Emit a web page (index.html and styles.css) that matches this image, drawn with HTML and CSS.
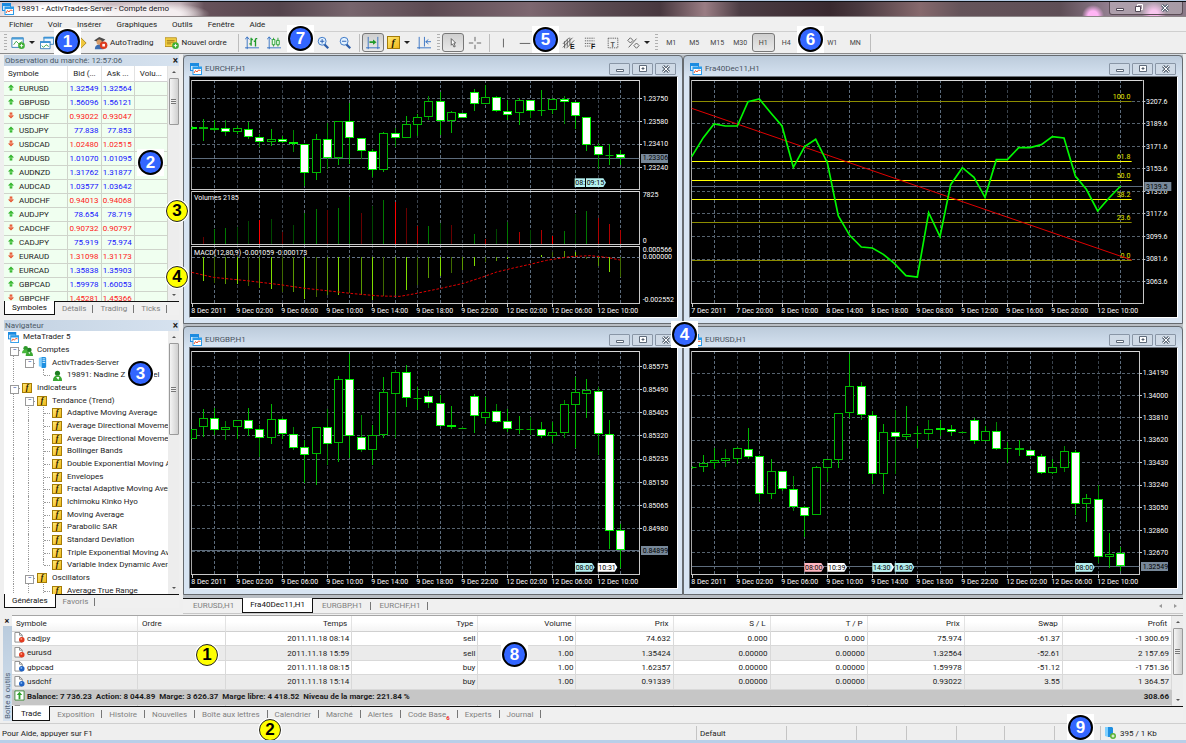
FILE: index.html
```html
<!DOCTYPE html>
<html lang="fr">
<head>
<meta charset="utf-8">
<title>19891 - ActivTrades-Server - Compte demo</title>
<link rel="stylesheet" href="styles.css">
</head>
<body>
<svg class="defs" aria-hidden="true">
  <symbol id="i-app" viewBox="0 0 12 12"><path d="M0 0h9v8H0z" fill="#1c8be0"/><path d="M1 3h7v4H1z" fill="#cfe9fb"/><path d="M2.500 3.500h9.500V12H2.500z" fill="#2a9bea"/><path d="M3.500 6h7.500v5H3.500z" fill="#fff"/><path d="M4 10l1.500-2.500 1.500 1.500 1.500-2 2 .5" fill="none" stroke="#f0562a"/></symbol>
  <symbol id="i-up" viewBox="0 0 8 8"><path d="M4 .5L7.500 4H5.500v3.500h-3V4H.5z" fill="#2fb32a"/><path d="M3.500 3h1v3h-1z" fill="#9be88f"/></symbol>
  <symbol id="i-down" viewBox="0 0 8 8"><path d="M4 7.500L.5 4h2V.5h3V4h2z" fill="#e5532c"/><path d="M3.500 2h1v3h-1z" fill="#ffc9b5"/></symbol>
  <symbol id="i-users" viewBox="0 0 12 12"><circle cx="4" cy="3.500" r="2.500" fill="#2f9a2b"/><path d="M0 9q0-4 4-4t4 4z" fill="#49b83c"/><circle cx="8" cy="5.500" r="2.500" fill="#1f7f22"/><path d="M4 12q0-5 4-5t4 5z" fill="#3aa832"/><path d="M7 8l1 2 1-2z" fill="#fff"/></symbol>
  <symbol id="i-user" viewBox="0 0 12 12"><circle cx="6" cy="3.500" r="2.800" fill="#1f7f22"/><path d="M1 12q0-6 5-6t5 6z" fill="#3aa832"/><path d="M4.500 7.500L7 11l1-3.500z" fill="#fff"/></symbol>
  <symbol id="i-server" viewBox="0 0 12 12"><path d="M2 1l3-1v11l-3-1z" fill="#7fd0ff"/><path d="M5 0h4l1 1v10l-1 1H5z" fill="#1e8fe0"/><path d="M6 2h3M6 4h3M6 6h3" stroke="#d8f0ff"/></symbol>
  <symbol id="i-sell" viewBox="0 0 12 12"><path d="M1 .5h5L9 3.500V11H1z" fill="#fff" stroke="#888"/><path d="M6 .5v3h3" fill="none" stroke="#888"/><circle cx="8.500" cy="8.500" r="3" fill="#e23a1e"/><circle cx="8" cy="7.500" r="1" fill="#ff9d80"/></symbol>
  <symbol id="i-buy" viewBox="0 0 12 12"><path d="M1 .5h5L9 3.500V11H1z" fill="#fff" stroke="#888"/><path d="M6 .5v3h3" fill="none" stroke="#888"/><circle cx="8.500" cy="8.500" r="3" fill="#1f62c4"/><circle cx="8" cy="7.500" r="1" fill="#86bcf5"/></symbol>
  <symbol id="i-min" viewBox="0 0 12 8"><path d="M2.500 4.500h7v2h-7z" fill="#fff" stroke="#5f6b7a"/></symbol>
  <symbol id="i-max" viewBox="0 0 12 8"><path d="M2.500.5h7v6h-7z" fill="#fff" stroke="#5f6b7a"/><path d="M5 3h2v1H5z" stroke="#5f6b7a"/></symbol>
  <symbol id="i-close" viewBox="0 0 12 8"><path d="M3 1l6 6M9 1L3 7" stroke="#5f6b7a" stroke-width="3"/><path d="M3 1l6 6M9 1L3 7" stroke="#fff"/></symbol>
</svg>

<div class="app">
  <header class="titlebar">
    <svg class="ico12"><use href="#i-app"/></svg>
    <h1>19891 - ActivTrades-Server - Compte demo</h1>
    <div class="caption">
      <button aria-label="Réduire"><svg viewBox="0 0 12 8"><path d="M2.500 4.500h7v2h-7z" fill="#fff" stroke="#534a58"/></svg></button>
      <button aria-label="Restaurer"><svg viewBox="0 0 12 8"><path d="M4.500.5h5v5h-5z" fill="none" stroke="#fff"/><path d="M2.500 2.500h5v5h-5z" fill="#fff" stroke="#534a58"/></svg></button>
      <button aria-label="Fermer" class="wide"><svg><use href="#i-close"/></svg></button>
    </div>
  </header>

  <nav class="menubar">
    <button>Fichier</button><button>Voir</button><button>Insérer</button><button>Graphiques</button><button>Outils</button><button>Fenêtre</button><button>Aide</button>
  </nav>

  <div class="toolbar">
    <span class="grip"></span>
    <button class="drop" aria-label="Nouveau graphique"><svg viewBox="0 0 16 14"><path d="M1 1h13v11H1z" fill="#fff" stroke="#2a78b8"/><path d="M1 1h13v2H1z" fill="#4a9fd8"/><path d="M3 9l3-4 3 3 4-3" fill="none" stroke="#2e9a3a"/><circle cx="12" cy="10" r="3.800" fill="#3fae35"/><path d="M12 8v4M10 10h4" stroke="#fff"/></svg><i class="arrow"></i></button>
    <button class="tb" aria-label="Profils"><svg viewBox="0 0 16 14"><path d="M4.500.5h11v8h-11z" fill="#e7f4ff" stroke="#2a78b8"/><path d="M4 0h12v2H4z" fill="#3b93d6"/><path d="M.5 5.500h11v8H.5z" fill="#fff" stroke="#2a78b8"/><path d="M0 5h12v2H0z" fill="#3b93d6"/><path d="M2 10l2 2 3-3 3 2" fill="none" stroke="#2e9a3a"/></svg></button>
    <button class="folder" aria-label="Navigateur"><svg viewBox="0 0 16 14"><path d="M9 1l6 6-6 6-6-6z" fill="#f0c83c" stroke="#a88420"/></svg></button>
    <button class="text"><svg viewBox="0 0 16 14"><path d="M0 4l6-4 7 3-5 4z" fill="#4b4b4b"/><circle cx="6" cy="6" r="3" fill="#d89c68"/><path d="M1 14q0-6 6-5l4 5z" fill="#3d6db0"/><circle cx="11" cy="9.500" r="4.300" fill="#dd3a1d"/><path d="M9.500 8h3v3h-3z" fill="#fff"/></svg>AutoTrading</button>
    <button class="text"><svg viewBox="0 0 16 14"><path d="M0 1h13v10H0z" fill="#f7d548" stroke="#b48c1c"/><path d="M2 4h9M2 6h9M2 8h5" stroke="#9a7410"/><circle cx="12" cy="10" r="3.800" fill="#3fae35"/><path d="M12 8v4M10 10h4" stroke="#fff"/></svg>Nouvel ordre</button>
    <span class="sep"></span>
    <button class="tb" aria-label="Barres"><svg viewBox="0 0 16 14"><path d="M2.500 0v14M0 12.500h16M0 3l2.500-3L5 3" fill="none" stroke="#2d6cc0"/><path d="M7 1v9M5 8h2M7 3h2M12 2v9M10 5h2M12 2h2" stroke="#1f9a2a" stroke-width="1.500"/></svg></button>
    <button class="tb" aria-label="Bougies"><svg viewBox="0 0 16 14"><path d="M2.500 0v14M0 12.500h16M0 3l2.500-3L5 3" fill="none" stroke="#2d6cc0"/><path d="M7.500 1v10M12.500 1v10" stroke="#1f9a2a"/><path d="M6 3h3v6H6zM11 4h3v5h-3z" fill="#e8ffe8" stroke="#1f9a2a"/></svg></button>
    <button class="tb roomy" aria-label="Ligne"></button>
    <button class="tb" aria-label="Zoom avant"><svg viewBox="0 0 16 14"><path d="M9 8l5 5" stroke="#2d5da8" stroke-width="2.500"/><circle cx="7" cy="5" r="4.500" fill="#e3f2ff" stroke="#2d6cc0"/><path d="M4.500 5h5M7 2.500v5" stroke="#1c55b0"/></svg></button>
    <button class="tb" aria-label="Zoom arrière"><svg viewBox="0 0 16 14"><path d="M9 8l5 5" stroke="#2d5da8" stroke-width="2.500"/><circle cx="7" cy="5" r="4.500" fill="#e3f2ff" stroke="#2d6cc0"/><path d="M4.500 5h5" stroke="#1c55b0"/></svg></button>
    <span class="sep tight"></span>
    <button class="tb on" aria-label="Décalage auto" aria-pressed="true"><svg viewBox="0 0 16 14"><path d="M2.500 0v14M13.500 0v14M0 12.500h16" stroke="#2d6cc0"/><path d="M4 6h5" stroke="#1f9a2a" stroke-width="2"/><path d="M8 3l4 3-4 3z" fill="#1f9a2a"/></svg></button>
    <button class="drop roomy" aria-label="Indicateurs"><span class="fx big">f</span><i class="arrow"></i></button>
    <button class="tb" aria-label="Décaler"><svg viewBox="0 0 16 14"><path d="M2.500 0v14M8.500 0v11M0 12.500h16M10 5.500h6M13 3l-3 2.500L13 8" fill="none" stroke="#2d6cc0"/></svg></button>
    <span class="grip"></span>
    <button class="tb on" aria-label="Curseur" aria-pressed="true"><svg viewBox="0 0 16 14"><path d="M6 2l5 5H9l1.500 4-1.500.5L7.500 8 6 9.500z" fill="#fff" stroke="#555"/></svg></button>
    <button class="tb" aria-label="Réticule"><svg viewBox="0 0 16 14"><path d="M8 0v5M8 9v5M1 7h5M10 7h5" stroke="#555"/></svg></button>
    <span class="sep tight"></span>
    <button class="tb" aria-label="Ligne verticale"><svg viewBox="0 0 16 14"><path d="M8.500 2v10" stroke="#555"/></svg></button>
    <button class="tb" aria-label="Ligne horizontale"><svg viewBox="0 0 16 14"><path d="M2 7.500h12" stroke="#555"/></svg></button>
    <button class="tb" aria-label="Ligne de tendance"></button>
    <button class="tb" aria-label="Canal"><svg viewBox="0 0 16 14"><path d="M1 12L12 1M1 8l7-7M5 13l9-9M3 5v8M6 3v8M9 1v8" stroke="#555"/><text x="9" y="14" class="mark">E</text></svg></button>
    <button class="tb" aria-label="Fibonacci"><svg viewBox="0 0 16 14"><path d="M1 1.500h11M1 4.500h11M1 7.500h11M1 10.500h6" stroke="#555" stroke-dasharray="1.500 1"/><text x="8" y="14" class="mark">F</text></svg></button>
    <button class="tb" aria-label="Texte"><svg viewBox="0 0 16 14"><path d="M2.500 1.500h11v11h-11z" fill="none" stroke="#555" stroke-dasharray="1.500 1"/><text x="5" y="11" class="mark lite">T</text></svg></button>
    <button class="drop roomy" aria-label="Formes"><svg viewBox="0 0 16 14"><path d="M2 4l3-3 3 3-3 3zM3 12l9-10M9 10l3-3 3 3-3 3z" fill="none" stroke="#555"/></svg><i class="arrow"></i></button>
    <span class="grip"></span>
    <button class="tf">M1</button><button class="tf">M5</button><button class="tf">M15</button><button class="tf">M30</button><button class="tf on" aria-pressed="true">H1</button><button class="tf">H4</button><button class="tf" aria-label="D1"></button><button class="tf">W1</button><button class="tf">MN</button>
    <span class="sep tight"></span>
  </div>

  <div class="main">
    <aside class="side">
      <section class="panel market">
        <h2>Observation du marché: 12:57:06<button aria-label="Fermer">×</button></h2>
        <div class="scroller">
          <div class="view">
            <table class="quotes">
              <colgroup><col class="q1"><col class="q2"><col class="q2"><col class="q2"></colgroup>
              <thead><tr><th>Symbole</th><th>Bid (...</th><th>Ask ...</th><th>Volu...</th></tr></thead>
              <tbody>
                <tr><td><svg><use href="#i-up"/></svg>EURUSD</td><td>1.32549</td><td>1.32564</td><td></td></tr>
                <tr><td><svg><use href="#i-up"/></svg>GBPUSD</td><td>1.56096</td><td>1.56121</td><td></td></tr>
                <tr class="dn"><td><svg><use href="#i-down"/></svg>USDCHF</td><td>0.93022</td><td>0.93047</td><td></td></tr>
                <tr><td><svg><use href="#i-up"/></svg>USDJPY</td><td>77.838</td><td>77.853</td><td></td></tr>
                <tr class="dn"><td><svg><use href="#i-down"/></svg>USDCAD</td><td>1.02480</td><td>1.02515</td><td></td></tr>
                <tr><td><svg><use href="#i-up"/></svg>AUDUSD</td><td>1.01070</td><td>1.01095</td><td></td></tr>
                <tr><td><svg><use href="#i-up"/></svg>AUDNZD</td><td>1.31762</td><td>1.31877</td><td></td></tr>
                <tr><td><svg><use href="#i-up"/></svg>AUDCAD</td><td>1.03577</td><td>1.03642</td><td></td></tr>
                <tr class="dn"><td><svg><use href="#i-down"/></svg>AUDCHF</td><td>0.94013</td><td>0.94068</td><td></td></tr>
                <tr><td><svg><use href="#i-up"/></svg>AUDJPY</td><td>78.654</td><td>78.719</td><td></td></tr>
                <tr class="dn"><td><svg><use href="#i-down"/></svg>CADCHF</td><td>0.90732</td><td>0.90797</td><td></td></tr>
                <tr><td><svg><use href="#i-up"/></svg>CADJPY</td><td>75.919</td><td>75.974</td><td></td></tr>
                <tr class="dn"><td><svg><use href="#i-down"/></svg>EURAUD</td><td>1.31098</td><td>1.31173</td><td></td></tr>
                <tr><td><svg><use href="#i-up"/></svg>EURCAD</td><td>1.35838</td><td>1.35903</td><td></td></tr>
                <tr><td><svg><use href="#i-up"/></svg>GBPCAD</td><td>1.59978</td><td>1.60053</td><td></td></tr>
                <tr class="dn"><td><svg><use href="#i-down"/></svg>GBPCHF</td><td>1.45281</td><td>1.45366</td><td></td></tr>
              </tbody>
            </table>
          </div>
          <div class="vbar"><i class="up"></i><span class="thumb short"></span><i class="down"></i></div>
        </div>
        <div class="tabs"><button class="sel">Symboles</button><button>Détails</button><button>Trading</button><button>Ticks</button></div>
      </section>

      <section class="panel navi">
        <h2>Navigateur<button aria-label="Fermer">×</button></h2>
        <div class="scroller">
          <ul class="tree">
            <li class="root"><svg><use href="#i-app"/></svg>MetaTrader 5</li>
            <li><i class="box"></i><svg><use href="#i-users"/></svg>Comptes</li>
            <li><i class="v"></i><i class="box"></i><svg><use href="#i-server"/></svg>ActivTrades-Server</li>
            <li><i class="v"></i><i></i><i class="end"></i><svg><use href="#i-user"/></svg>19891: Nadine Z&nbsp;&nbsp;&nbsp;&nbsp;&nbsp;&nbsp;&nbsp;&nbsp;&nbsp;&nbsp;&nbsp;&nbsp;&nbsp;&nbsp;el</li>
            <li><i class="box"></i><span class="fx">f</span>Indicateurs</li>
            <li><i class="v"></i><i class="box"></i><span class="fx">f</span>Tendance (Trend)</li>
            <li><i class="v"></i><i class="v"></i><i class="tee"></i><span class="fx">f</span>Adaptive Moving Average</li>
            <li><i class="v"></i><i class="v"></i><i class="tee"></i><span class="fx">f</span>Average Directional Movement Index</li>
            <li><i class="v"></i><i class="v"></i><i class="tee"></i><span class="fx">f</span>Average Directional Movement Index Wilder</li>
            <li><i class="v"></i><i class="v"></i><i class="tee"></i><span class="fx">f</span>Bollinger Bands</li>
            <li><i class="v"></i><i class="v"></i><i class="tee"></i><span class="fx">f</span>Double Exponential Moving Average</li>
            <li><i class="v"></i><i class="v"></i><i class="tee"></i><span class="fx">f</span>Envelopes</li>
            <li><i class="v"></i><i class="v"></i><i class="tee"></i><span class="fx">f</span>Fractal Adaptive Moving Average</li>
            <li><i class="v"></i><i class="v"></i><i class="tee"></i><span class="fx">f</span>Ichimoku Kinko Hyo</li>
            <li><i class="v"></i><i class="v"></i><i class="tee"></i><span class="fx">f</span>Moving Average</li>
            <li><i class="v"></i><i class="v"></i><i class="tee"></i><span class="fx">f</span>Parabolic SAR</li>
            <li><i class="v"></i><i class="v"></i><i class="tee"></i><span class="fx">f</span>Standard Deviation</li>
            <li><i class="v"></i><i class="v"></i><i class="tee"></i><span class="fx">f</span>Triple Exponential Moving Average</li>
            <li><i class="v"></i><i class="v"></i><i class="end"></i><span class="fx">f</span>Variable Index Dynamic Average</li>
            <li><i class="v"></i><i class="box"></i><span class="fx">f</span>Oscillators</li>
            <li><i class="v"></i><i class="v"></i><i class="tee"></i><span class="fx">f</span>Average True Range</li>
          </ul>
          <div class="vbar"><i class="up"></i><span class="thumb long"></span><i class="down"></i></div>
        </div>
        <div class="tabs"><button class="sel">Générales</button><button>Favoris</button></div>
      </section>
    </aside>

    <div class="work">
      <div class="windows">
        <section class="win"><h3><svg class="ico12"><use href="#i-app"/></svg>EURCHF,H1<span class="ctl"><button aria-label="Réduire"><svg><use href="#i-min"/></svg></button><button aria-label="Agrandir"><svg><use href="#i-max"/></svg></button><button aria-label="Fermer"><svg><use href="#i-close"/></svg></button></span></h3><div class="chart"><svg id="eurchf" viewBox="30 81 1461 720" preserveAspectRatio="xMinYMin meet"></svg></div></section>
        <section class="win"><h3><svg class="ico12"><use href="#i-app"/></svg>Fra40Dec11,H1<span class="ctl"><button aria-label="Réduire"><svg><use href="#i-min"/></svg></button><button aria-label="Agrandir"><svg><use href="#i-max"/></svg></button><button aria-label="Fermer"><svg><use href="#i-close"/></svg></button></span></h3><div class="chart"><svg id="fra40" viewBox="30 81 1461 720" preserveAspectRatio="xMinYMin meet"></svg></div></section>
        <section class="win"><h3><svg class="ico12"><use href="#i-app"/></svg>EURGBP,H1<span class="ctl"><button aria-label="Réduire"><svg><use href="#i-min"/></svg></button><button aria-label="Agrandir"><svg><use href="#i-max"/></svg></button><button aria-label="Fermer"><svg><use href="#i-close"/></svg></button></span></h3><div class="chart"><svg id="eurgbp" viewBox="30 69 1461 720" preserveAspectRatio="xMinYMin meet"></svg></div></section>
        <section class="win"><h3><svg class="ico12"><use href="#i-app"/></svg>EURUSD,H1<span class="ctl"><button aria-label="Réduire"><svg><use href="#i-min"/></svg></button><button aria-label="Agrandir"><svg><use href="#i-max"/></svg></button><button aria-label="Fermer"><svg><use href="#i-close"/></svg></button></span></h3><div class="chart"><svg id="eurusd" viewBox="30 69 1461 720" preserveAspectRatio="xMinYMin meet"></svg></div></section>
      </div>
      <div class="tabs mdi"><button>EURUSD,H1</button><button class="sel">Fra40Dec11,H1</button><button>EURGBP,H1</button><button>EURCHF,H1</button><span class="pager"><i></i><i class="r"></i></span></div>
    </div>
  </div>

  <section class="toolbox">
    <div class="spine"><button aria-label="Fermer">×</button><span>Boîte à outils</span></div>
    <div class="body">
      <div class="scroller">
        <div class="view">
          <table class="trades">
            <colgroup><col class="c126"><col class="c88"><col class="c126"><col class="c126"><col class="c98"><col class="c97"><col class="c97"><col class="c97"><col class="c97"><col class="c98"><col class="c109"></colgroup>
            <thead><tr><th>Symbole</th><th>Ordre</th><th>Temps</th><th>Type</th><th>Volume</th><th>Prix</th><th>S / L</th><th>T / P</th><th>Prix</th><th>Swap</th><th>Profit</th></tr></thead>
            <tbody>
              <tr><td><svg><use href="#i-sell"/></svg>cadjpy</td><td></td><td>2011.11.18 08:14</td><td>sell</td><td>1.00</td><td>74.632</td><td>0.000</td><td>0.000</td><td>75.974</td><td>-61.37</td><td>-1 300.69</td></tr>
              <tr><td><svg><use href="#i-sell"/></svg>eurusd</td><td></td><td>2011.11.18 15:59</td><td>sell</td><td>1.00</td><td>1.35424</td><td>0.00000</td><td>0.00000</td><td>1.32564</td><td>-52.61</td><td>2 157.69</td></tr>
              <tr><td><svg><use href="#i-buy"/></svg>gbpcad</td><td></td><td>2011.11.18 08:15</td><td>buy</td><td>1.00</td><td>1.62357</td><td>0.00000</td><td>0.00000</td><td>1.59978</td><td>-51.12</td><td>-1 751.36</td></tr>
              <tr><td><svg><use href="#i-buy"/></svg>usdchf</td><td></td><td>2011.11.18 15:14</td><td>buy</td><td>1.00</td><td>0.91339</td><td>0.00000</td><td>0.00000</td><td>0.93022</td><td>3.55</td><td>1 364.57</td></tr>
              <tr class="sum"><td colspan="10"><svg viewBox="0 0 12 12"><path d="M1 1h10v10H1z" fill="#fff" stroke="#3a8a34"/><path d="M6 2l3 3.500H7V10H5V5.500H3z" fill="#2fa32a"/></svg>Balance: 7 736.23&nbsp; Action: 8 044.89&nbsp; Marge: 3 626.37&nbsp; Marge libre: 4 418.52&nbsp; Niveau de la marge: 221.84 %</td><td>308.66</td></tr>
              <tr class="next"><td><svg><use href="#i-buy"/></svg>eurusd</td><td>8272014</td><td>2011.11.18 15:31</td><td>buy limit</td><td>1.00 / 0.00</td><td>1.40640</td><td>0.00000</td><td>0.00000</td><td>1.32540</td><td></td><td>placed</td></tr>
            </tbody>
          </table>
        </div>
        <div class="vbar"><i class="up"></i><span class="thumb short"></span><i class="down"></i></div>
      </div>
      <div class="tabs"><button class="sel">Trade</button><button>Exposition</button><button>Histoire</button><button>Nouvelles</button><button>Boîte aux lettres</button><button>Calendrier</button><button>Marché</button><button>Alertes</button><button>Code Base<sub>6</sub></button><button>Experts</button><button>Journal</button></div>
    </div>
  </section>

  <footer class="status">
    <span class="s-help">Pour Aide, appuyer sur F1</span>
    <span class="s-90">Default</span><span class="s-70"></span><span class="s-50"></span><span class="s-50"></span><span class="s-48"></span><span class="s-50"></span><span class="s-46"></span>
    <span class="s-net"><svg viewBox="0 0 12 12"><path d="M1 0h3v10L1 9z" fill="#7fd0ff"/><path d="M4 0h4l1 1v9H4z" fill="#1e8fe0"/><circle cx="9" cy="9" r="3" fill="#5cb336"/><path d="M9 7.500v3M7.500 9h3" stroke="#fff"/></svg>395 / 1 Kb</span>
  </footer>

  <div class="pins">
    <b class="pin blue p1">1</b><b class="pin blue p2">2</b><b class="pin blue p3">3</b><b class="pin blue p4">4</b><b class="pin blue p5">5</b><b class="pin blue p6">6</b><b class="pin blue p7">7</b><b class="pin blue p8">8</b><b class="pin blue p9">9</b>
    <b class="pin gold y1">1</b><b class="pin gold y2">2</b><b class="pin gold y3">3</b><b class="pin gold y4">4</b>
  </div>
</div>
<script src="charts.js"></script>
</body>
</html>
```

FILE: styles.css
```css
* { box-sizing: border-box; }
body { margin: 0; font: 8px/12px Roboto, "Liberation Sans", sans-serif; color: #1c1c1c; background: #f0f0f0; }
h1, h2, h3, ul { margin: 0; padding: 0; font-size: 8px; font-weight: 400; list-style: none; }
button { margin: 0; padding: 0; border: 0; background: none; font: inherit; color: inherit; white-space: nowrap; }
.defs { position: absolute; width: 0; height: 0; }
.ico12 { width: 12px; height: 12px; flex: none; }

.app { position: relative; min-height: 100vh; display: flex; flex-direction: column; border-top: 1px solid #b4cbe4; border-bottom: 3px solid #b8cfe9; background: #efefef; overflow: hidden; }

.titlebar { display: flex; align-items: center; gap: 3px; height: 16px; padding-left: 2px; border-top: 1px solid #101014; border-bottom: 1px solid #8d8688;
  background:
    radial-gradient(ellipse 70px 14px at 60px 12px, #fff 60%, #fff0 100%),
    radial-gradient(ellipse 60px 12px at 150px 12px, #f4eef0 50%, #f4eef000 100%),
    radial-gradient(circle at 1093px 14px, #ffb4f4 0 5px, #ffb4f400 11px),
    radial-gradient(circle at 1154px 12px, #f6b4e8 0 4px, #f6b4e800 12px),
    linear-gradient(90deg, #d9cbd0 0, #c5b4ba 180px, #67525b 204px, #54444c 280px, #77656d 350px, #5c4a52 430px, #7d6770 530px, #5a4a51 600px, #48383f 660px, #9a7d84 705px, #4c3d44 740px, #39292f 830px, #4a3a40 860px, #86696d 920px, #65545a 960px, #5e4e56 1060px, #937f90 1110px, #8a7a88 100%); }
.titlebar h1 { line-height: 14px; color: #15151a; }
.caption { margin: 0 3px 0 auto; align-self: flex-start; display: flex; height: 13px; border: 1px solid #5a4c55; border-top: 0; border-radius: 0 0 3px 3px; background: #ffffff40; }
.caption button { width: 19px; display: grid; place-items: center; }
.caption .wide { width: 34px; }
.caption svg { width: 12px; height: 8px; display: block; }

.menubar { display: flex; gap: 15px; height: 15px; padding: 0 9px; background: #f0f0f0; border-bottom: 1px solid #cfcfcf; }
.menubar button { line-height: 15px; }

.toolbar { display: flex; align-items: center; height: 22px; padding: 0 2px; border-bottom: 1px solid #8a8a8a; background: #efefef; white-space: nowrap; }
.toolbar svg { width: 14px; height: 14px; display: block; flex: none; }
.toolbar button { height: 19px; display: flex; align-items: center; justify-content: center; flex: none; }
.grip { width: 3px; height: 18px; margin: 0 2px; background: repeating-linear-gradient(#b0b0b0 0 1px, #efefef 1px 3px); flex: none; }
.sep { width: 1px; height: 18px; margin: 0 2px 0 3px; background: #bdbdbd; flex: none; }
.toolbar .tb { width: 22px; }
.toolbar .tb.roomy { width: 27px; }
.tb.on, .tf.on { border: 1px solid #777; border-radius: 3px; background: linear-gradient(#cfcfcf, #e9e9e9); }
.toolbar .drop { width: 27px; gap: 4px; }
.toolbar .drop.roomy { width: 29px; }
.arrow { border: 3px solid transparent; border-top-color: #222; border-bottom: 0; }
.folder { width: 32px; }
.folder svg { margin-left: 12px; }
.toolbar .text { gap: 2px; padding: 0 4px; margin-right: 4px; }
.tf { width: 23px; color: #444; font-size: 7px; }
.mark { font: bold 8px "Liberation Sans", sans-serif; fill: #111; }
.mark.lite { fill: #555; }
.fx { width: 10px; height: 10px; flex: none; display: inline-grid; place-items: center; border: 1px solid #a47c08; background: linear-gradient(135deg, #ffe873, #f0b818); font: italic bold 8px/8px "Liberation Serif", serif; color: #1c1400; }
.fx.big { width: 13px; height: 13px; font-size: 10px; }

.main { flex: 1; display: grid; grid-template-columns: 179px minmax(0, 1fr); column-gap: 4px; padding-right: 3px; min-height: 0; }
.side { display: grid; grid-template: 260px minmax(0, 1fr) / minmax(0, 1fr); row-gap: 5px; padding: 1px 0 6px 4px; min-width: 0; min-height: 0; }
.panel { display: flex; flex-direction: column; min-width: 0; min-height: 0; }
.panel h2 { display: flex; justify-content: space-between; height: 11px; line-height: 11px; padding: 0 1px; background: linear-gradient(90deg, #c3d2e2, #d6e2ef); color: #4a5866; }
.panel h2 button { font-size: 10px; font-weight: 700; color: #222; line-height: 10px; }
.scroller { flex: 1; display: flex; min-height: 0; overflow: hidden; background: #fff; }
.view { flex: 1; min-width: 0; overflow: hidden; }
.vbar { width: 11px; flex: none; display: flex; flex-direction: column; align-items: center; background: #ededed; }
.vbar i { height: 12px; display: grid; place-items: center; }
.vbar i::before { content: ""; border: 2px solid transparent; }
.vbar .up::before { border-bottom-color: #555; border-top: 0; }
.vbar .down { margin-top: auto; }
.vbar .down::before { border-top-color: #555; border-bottom: 0; }
.thumb { width: 10px; border: 1px solid #9a9a9a; border-radius: 1px; display: grid; place-items: center; background: linear-gradient(90deg, #f4f4f4, #cfcfcf); }
.thumb::before { content: ""; width: 5px; height: 5px; background: repeating-linear-gradient(#777 0 1px, #eee 1px 2px); }
.thumb.short { height: 47px; }
.thumb.long { height: 92px; }

table { border-collapse: separate; border-spacing: 0; table-layout: fixed; width: 100%; }
th, td { padding: 0; font-weight: 400; white-space: nowrap; overflow: hidden; }
td svg { width: 11px; height: 11px; vertical-align: middle; }
.quotes th { height: 16px; line-height: 15px; text-align: center; background: #fff; border-right: 1px solid #e2e2e2; border-bottom: 1px solid #d0d0d0; }
.quotes th:first-child { text-align: left; padding-left: 4px; }
.q1 { width: 64px; } .q2 { width: 33px; }
.quotes td { height: 14px; line-height: 14px; text-align: right; padding-right: 2px; color: #1414ff; background: #f0fff0; border-right: 1px solid #cfd4cb; border-bottom: 1px solid #cfd4cb; }
.quotes td { line-height: 13px; }
.quotes td:first-child { text-align: left; color: #1c1c1c; }
.quotes td svg { width: 8px; height: 7px; margin: 0 4px 2px 3px; }
.quotes .dn td { color: #ff1a1a; }
.quotes .dn td:first-child { color: #1c1c1c; }

.tabs { display: flex; height: 14px; border-top: 1px solid #111; background: #f0f0f0; color: #808080; }
.tabs button { padding: 0 7px; line-height: 13px; position: relative; }
.tabs button::after { content: ""; position: absolute; right: 0; top: 3px; height: 8px; border-right: 1px solid #777; }
.tabs .sel { margin-top: -1px; border: 1px solid #111; border-top: 0; background: #fff; color: #111; }
.tabs .sel::after { display: none; }
.tabs sub { font-size: 6px; font-weight: 700; color: #f02020; line-height: 6px; }

.tree { flex: 1; min-width: 0; display: flex; flex-direction: column; margin-bottom: -3px; overflow: hidden; background: #fff; }
.tree li { flex: 1; display: flex; align-items: center; min-height: 0; padding-left: 1px; white-space: nowrap; overflow: hidden; }
.tree svg { width: 11px; height: 11px; flex: none; margin: 0 4px 0 2px; }
.tree .root svg { margin-left: 3px; }
.tree .fx { margin: 0 5px 0 2px; }
.tree i { position: relative; width: 15px; align-self: stretch; flex: none; }
.tree .v::before, .tree .tee::before, .tree .end::before { content: ""; position: absolute; left: 8px; top: 0; bottom: 0; border-left: 1px dotted #999; }
.tree .end::before { bottom: 50%; }
.tree .tee::after, .tree .end::after, .box::after { content: ""; position: absolute; left: 9px; right: 0; top: 50%; border-top: 1px dotted #999; }
.box::before { content: "−"; position: absolute; z-index: 1; left: 5px; top: 3px; width: 7px; height: 7px; border: 1px solid #999; background: #fff; font-style: normal; font-size: 7px; line-height: 5px; text-align: center; color: #2347a0; }

.work { display: flex; flex-direction: column; min-width: 0; padding-top: 1px; background: #d5dbe1; }
.windows { flex: 1; display: grid; grid-template: minmax(0, 1fr) minmax(0, 1fr) / minmax(0, 1fr) minmax(0, 1fr); row-gap: 2px; padding-bottom: 3px; min-height: 0; background: #b9bec4; }
.win { display: flex; flex-direction: column; min-height: 0; padding: 0 4px 5px 5px; border: 1px solid #666b70; border-radius: 4px 4px 0 0; background: linear-gradient(#bccbdb, #d7e4f2 22px); }
.win h3 { display: flex; align-items: center; gap: 3px; height: 20px; padding: 5px 2px 0 1px; line-height: 12px; color: #48525e; }
.ctl { margin-left: auto; display: flex; gap: 2px; }
.ctl button { width: 21px; height: 12px; display: grid; place-items: center; border: 1px solid #8996a6; border-radius: 1px; background: #cfdae6; }
.ctl svg { width: 12px; height: 8px; display: block; }
.chart { flex: 1; min-height: 0; border: 1px solid #fff; border-top-color: #6d737a; border-left-color: #6d737a; background: #000; }
.chart svg { width: 100%; height: 100%; display: block; }
.chart text { font: 21px Roboto, "Liberation Sans", sans-serif; fill: #fff; }
.chart .end { text-anchor: end; fill: #e6e600; }
.chart .dark { fill: #000; }
.tabs.mdi { height: 16px; border-bottom: 1px solid #c8c8c8; padding-left: 1px; }
.mdi button { padding: 0 8px 0 9px; line-height: 14px; }
.mdi .sel { padding: 0 7px; }
.mdi button:first-child::after { display: none; }
.pager { margin-left: auto; display: flex; gap: 12px; align-items: center; padding-right: 6px; }
.pager i { border: 2px solid transparent; border-right: 3px solid #999; border-left: 0; }
.pager .r { border-left: 3px solid #999; border-right: 0; }

.toolbox { display: flex; height: 110px; padding: 1px 3px 2px 2px; border-bottom: 1px solid #cfcfcf; }
.spine { width: 10px; flex: none; display: flex; flex-direction: column; align-items: center; }
.spine button { height: 11px; font-size: 9px; font-weight: 700; line-height: 10px; }
.spine span { flex: 1; width: 9px; line-height: 9px; writing-mode: vertical-rl; transform: rotate(180deg); background: linear-gradient(#d6e2ef, #b9cbdd); color: #4f6175; padding-top: 2px; }
.body { flex: 1; min-width: 0; display: flex; flex-direction: column; }
.toolbox .scroller { border-top: 1px solid #a5a5a5; }
.c126 { width: 126px; } .c88 { width: 88px; } .c98 { width: 98px; } .c97 { width: 97px; } .c109 { width: 109px; }
.trades th { height: 16px; line-height: 15px; text-align: right; padding: 0 4px; border-right: 1px solid #e3e3e3; border-bottom: 1px solid #d0d0d0; background: linear-gradient(#fff 40%, #f4f4f4); }
.trades th:nth-child(-n+2) { text-align: left; }
.trades td { height: 14px; line-height: 13px; text-align: right; padding: 0 2px; border-right: 1px solid #d9d9d9; border-bottom: 1px solid #d9d9d9; }
.trades td:first-child { text-align: left; padding-left: 2px; }
.trades td svg { margin: 0 2px 2px 0; }
.trades tr:nth-child(even) td { background: #ebebeb; }
.trades .sum td { height: 15px; line-height: 14px; font-weight: 700; background: #c6c6c6; border-color: #c6c6c6; }
.toolbox .tabs { height: 15px; }
.toolbox .tabs button { padding: 0 8px 0 7px; }
.toolbox .tabs .sel { padding: 0 8px; }

.status { display: flex; align-items: flex-end; height: 16px; padding-left: 2px; color: #222; }
.status span { height: 14px; line-height: 15px; border-left: 1px solid #c4c4c4; padding-left: 3px; flex: none; }
.status .s-help { flex: 1; border: 0; padding: 0; }
.s-90 { width: 90px; } .s-70 { width: 70px; } .s-50 { width: 50px; } .s-48 { width: 48px; } .s-46 { width: 46px; }
.s-net { width: 86px; display: flex; align-items: center; gap: 4px; }
.s-net svg { width: 12px; height: 12px; }

.pins { position: absolute; inset: 0; z-index: 2; pointer-events: none; }
.pin { position: absolute; display: grid; place-items: center; border-radius: 50%; font-family: "Liberation Sans", Arial, sans-serif; font-weight: 700; font-size: 17px; line-height: 20px; }
.blue { width: 25px; height: 25px; border: 2px solid #000; background: #3366ff; color: #fff; }
.blue::before { content: ""; position: absolute; z-index: -1; inset: -3px; background: #fff; }
.gold { width: 22px; height: 22px; border: 1px solid #222; background: #ff0; color: #000; box-shadow: 0 0 0 1px #fff; }
.p1 { left: 55px; top: 28px; } .p2 { left: 138px; top: 149px; } .p3 { left: 128px; top: 360px; } .p4 { left: 672px; top: 321px; }
.p5 { left: 533px; top: 26px; } .p6 { left: 798px; top: 26px; } .p7 { left: 288px; top: 25px; } .p8 { left: 502px; top: 641px; } .p9 { left: 1068px; top: 714px; }
.y1 { left: 196px; top: 643px; } .y2 { left: 259px; top: 718px; } .y3 { left: 166px; top: 199px; } .y4 { left: 166px; top: 265px; }
```

FILE: charts.js
```js
const NS = 'http://www.w3.org/2000/svg';
const STEP = 33.82;
const xAt = i => Math.round((35 + STEP * i) / 3) * 3;
const snap = y => Math.round(y / 3) * 3;

function add(svg, name, attrs, text) {
  const el = document.createElementNS(NS, name);
  for (const k in attrs) el.setAttribute(k, attrs[k]);
  if (text) el.textContent = text;
  svg.appendChild(el);
}
function line(svg, x1, y1, x2, y2, stroke, extra) {
  add(svg, 'path', Object.assign({ d: `M${x1} ${y1}L${x2} ${y2}`, stroke, 'stroke-width': 3, fill: 'none' }, extra));
}
const h = (svg, x1, x2, y, c, e) => line(svg, x1, snap(y) + 1.5, x2, snap(y) + 1.5, c, e);
const v = (svg, x, y1, y2, c, e) => line(svg, x + 1.5, snap(y1), x + 1.5, snap(y2), c, e);

function frame(svg, o) {
  for (let i = 2; i <= 38; i += 2) v(svg, xAt(i), o.top, o.bottom, i % 4 ? '#5c6c7c' : '#3a434d', { 'stroke-dasharray': '9 6' });
  o.grid.forEach(y => h(svg, 36, o.right, y, '#56636f', { 'stroke-dasharray': '9 6' }));
  o.boxes.forEach(b => {
    h(svg, 33, o.right, b[0], '#d8d8d8');
    h(svg, 33, o.right, b[1], '#c8c8c8');
    v(svg, 33, b[0], b[1], '#a8a8a8');
    v(svg, snap(o.right), b[0], b[1] + 3, '#c8c8c8');
  });
  o.labels.forEach((t, i) => {
    h(svg, o.right, o.right + 8, o.grid[i], '#ccc');
    add(svg, 'text', { x: o.right + 10, y: o.grid[i] + 8 }, t);
  });
  o.dates.forEach((t, i) => {
    v(svg, xAt(i * 4), o.bottom, o.bottom + 10, '#ccc');
    add(svg, 'text', { x: xAt(i * 4) - 2, y: o.bottom + 28 }, t);
  });
  h(svg, 36, o.right, o.price[0], '#5d6c7c');
}
function priceTag(svg, o) {
  add(svg, 'rect', { x: o.right + 5, y: snap(o.price[0]) - 12, width: 81, height: 27, fill: '#778899' });
  add(svg, 'text', { x: o.right + 10, y: o.price[0] + 8, class: 'dark' }, o.price[1]);
}
/* bar: body top, body bottom, high, low, filled */
function candles(svg, bars) {
  bars.forEach((b, i) => {
    const x = xAt(i), solid = b[4], c = solid ? '#00f400' : '#00b800';
    v(svg, x, b[2], b[3], i % 3 ? '#00b800' : '#008a00');
    const top = snap(b[0]), ht = snap(b[1]) - top, left = Math.max(x - 10.5, 34.5);
    if (ht < 6) h(svg, left, x + 13.5, top, c);
    else add(svg, 'rect', { x: left, y: top + 1.5, width: x + 13.5 - left, height: ht - 3, fill: solid ? '#fff' : '#000', stroke: c, 'stroke-width': 3 });
  });
}
function flag(svg, x, y, w, color, text) {
  add(svg, 'path', { d: `M${x} ${y}h${w - 8}l8 13l-8 13h-${w - 8}z`, fill: color });
  add(svg, 'text', { x: x + 2, y: y + 20, class: 'dark' }, text);
}

const DATES = ['8 Dec 2011', '9 Dec 02:00', '9 Dec 06:00', '9 Dec 10:00', '9 Dec 14:00', '9 Dec 18:00', '9 Dec 22:00', '12 Dec 02:00', '12 Dec 06:00', '12 Dec 10:00'];
const CYAN = '#b4f0f0';

/* EURCHF */
{
  const s = document.getElementById('eurchf');
  const o = { top: 91, bottom: 760, right: 1378, grid: [145, 214, 281, 352], labels: ['1.23750', '1.23580', '1.23410', '1.23240'],
    boxes: [[91, 418], [424, 583], [589, 760]], dates: DATES, price: [323, '1.23306'] };
  frame(s, o);
  h(s, 36, 1378, 620, '#66758a', { 'stroke-dasharray': '9 6' });
  candles(s, [[231,237,229,239,1],[232,236,207,272],[233,239,209,242],[233,245,209,259,1],[235,245,229,252],[238,260,217,266,1],[260,275,252,290,1],[267,275,237,288],[266,277,258,280,1],[275,281,241,305,1],[283,370,281,407,1],[268,368,253,389],[268,323,219,357,1],[213,323,213,345],[213,265,159,343,1],[265,303,265,326,1],[304,359,297,380,1],[250,360,245,365],[249,265,234,290,1],[223,265,198,265],[202,224,192,258],[154,200,138,209],[154,212,125,255,1],[187,212,183,248],[188,203,188,203,1],[127,163,117,182,1],[142,163,104,163],[142,182,139,187,1],[182,194,151,210,1],[151,188,144,224],[151,184,151,204,1],[181,184,120,197],[147,181,144,191],[148,157,138,222,1],[157,199,155,236,1],[202,286,202,304,1],[289,316,278,357,1],[316,316,282,346],[313,323,300,346,1]]);
  const col = { g: '#007800', d: '#004800', r: '#b00000', R: '#ff0000', k: '#680000' };
  '562k 538g 534g 530d 512d 510R 507d 545k 526d 488g 477g 480k 473g 440g 490k 468d 451g 455R 475k 528r 528g 518d 525k 583d 552g 567r 537d 516g 545r 540d 541r 557R 544g 492d 484g 505r 523r 540r'
    .split(' ').forEach((t, i) => v(s, xAt(i + 1), parseInt(t), 583, col[t[3]]));
  [694,699,701,703,708,713,717,725,726,748,741,735,735,729,735,750,739,735,720,705,683,678,668,660,647,636,632,628,620,621,615,607,603,607,627,648,666,682]
    .forEach((y, i) => v(s, xAt(i + 1), 620, y, ['#3f6a00', '#5a9800', '#7fdc00'][(i + 2) % 3]));
  add(s, 'polyline', { points: '35,667 100,682 200,692 300,704 375,715 440,722 520,731 600,738 660,739 700,732 778,716 850,700 900,684 950,666 1000,654 1050,643 1100,631 1170,620 1230,617 1280,622 1320,630', fill: 'none', stroke: '#e00000', 'stroke-width': 3, 'stroke-dasharray': '8 5' });
  add(s, 'text', { x: 42, y: 449 }, 'Volumes 2185');
  add(s, 'text', { x: 42, y: 614 }, 'MACD(12,80,9) -0.001059 -0.000173');
  [['7825', 441], ['0', 579], ['0.000566', 607], ['0.000000', 627], ['-0.002552', 756]].forEach(t => add(s, 'text', { x: 1388, y: t[1] }, t[0]));
  flag(s, 1218, 385, 60, CYAN, '09:15');
  add(s, 'rect', { x: 1184, y: 385, width: 31, height: 26, fill: CYAN });
  add(s, 'text', { x: 1186, y: 405, class: 'dark' }, '08:');
  priceTag(s, o);
}

/* Fra40 */
{
  const s = document.getElementById('fra40');
  const o = { top: 91, bottom: 760, right: 1388, grid: [153, 220, 288, 355, 424, 490, 559, 626, 694],
    labels: ['3207.6', '3189.6', '3171.6', '3153.6', '3135.6', '3117.6', '3099.6', '3081.6', '3063.6'], boxes: [[91, 760]],
    dates: ['7 Dec 2011', '7 Dec 20:00', '8 Dec 10:00', '8 Dec 14:00', '8 Dec 18:00', '9 Dec 08:00', '9 Dec 12:00', '9 Dec 16:00', '9 Dec 20:00', '12 Dec 10:00'], price: [409, '3139.5'] };
  frame(s, o);
  [[153, '100.0', 0], [334, '61.8', 1], [391, '50.0', 1], [448, '38.2', 1], [517, '23.6', 0], [631, '0.0', 0]].forEach(f => {
    h(s, 36, 1355, f[0], f[2] ? '#ffff00' : '#8c8c00');
    add(s, 'text', { x: 1351, y: f[0] - 7, class: 'end' }, f[1]);
  });
  line(s, 35, 175, 1355, 630, '#e00000');
  add(s, 'polyline', { points: '35,320 70,263 102,222 136,228 172,228 204,155 238,147 272,188 306,228 340,352 374,290 407,268 442,338 475,498 509,556 544,591 577,594 610,613 643,640 678,677 712,681 746,488 780,560 812,404 847,353 882,382 915,442 949,329 982,329 1016,293 1050,293 1084,284 1117,260 1152,264 1186,378 1219,418 1253,483 1287,444 1322,408', fill: 'none', stroke: '#00f800', 'stroke-width': 5 });
  priceTag(s, o);
}

/* EURGBP */
{
  const s = document.getElementById('eurgbp');
  const o = { top: 78, bottom: 748, right: 1378, grid: [124, 193, 262, 331, 401, 471, 541, 610, 679],
    labels: ['0.85575', '0.85490', '0.85405', '0.85320', '0.85235', '0.85150', '0.85065', '0.84980'], boxes: [[78, 748]], dates: DATES, price: [676, '0.84899'] };
  frame(s, o);
  candles(s, [[313,343,313,343],[280,307,252,336],[280,314,250,330,1],[307,314,288,345],[284,307,284,343],[285,313,248,332,1],[312,338,300,396,1],[283,338,237,357],[282,328,278,343,1],[328,368,306,375,1],[366,389,346,473,1],[307,388,307,480],[307,357,252,420,1],[163,355,152,411],[163,334,87,399,1],[335,374,269,380,1],[331,374,301,420],[202,331,155,339],[142,206,135,338],[142,220,120,245,1],[220,221,187,254],[213,234,197,249,1],[234,302,210,302,1],[300,307,242,311,1],[309,310,306,312],[213,274,207,323,1],[262,279,217,297],[259,290,236,293,1],[289,311,252,320,1],[312,314,272,327],[313,315,277,329],[313,334,291,339,1],[322,334,290,353],[238,323,225,339],[202,241,157,370],[196,206,162,278],[198,328,187,390,1],[328,617,285,671,1],[616,676,596,729,1]]);
  flag(s, 1185, 714, 59, CYAN, '08:00');
  flag(s, 1253, 714, 59, '#fff', '10:31');
  priceTag(s, o);
}

/* EURUSD */
{
  const s = document.getElementById('eurusd');
  const o = { top: 78, bottom: 748, right: 1378, grid: [143, 211, 277, 344, 412, 479, 547, 615, 682],
    labels: ['1.34190', '1.34000', '1.33810', '1.33620', '1.33430', '1.33240', '1.33050', '1.32860', '1.32670'], boxes: [[78, 748]], dates: DATES, price: [724, '1.32549'] };
  frame(s, o);
  candles(s, [[425,430,423,432],[414,426,390,442],[406,415,369,432],[399,407,371,426],[370,401,367,416],[373,395,309,402,1],[393,507,391,531,1],[438,506,402,521],[438,493,438,499,1],[492,547,453,557,1],[547,572,544,635,1],[426,571,423,571],[403,429,403,471],[263,404,263,428],[183,263,87,280],[183,271,171,284,1],[270,448,258,476,1],[321,446,297,507],[321,335,254,446,1],[327,337,243,344],[325,328,303,370],[312,326,285,344],[309,315,285,332,1],[312,321,299,334,1],[321,322,319,323],[285,349,279,356,1],[318,349,302,349],[318,372,291,374,1],[369,371,351,415],[370,374,345,392],[376,394,372,398,1],[393,443,386,447,1],[427,443,403,446],[378,429,363,440],[381,537,375,570,1],[520,537,506,591],[521,695,479,713,1],[686,695,625,728],[685,724,665,737,1]]);
  flag(s, 373, 714, 59, '#ffb6c1', '08:00');
  flag(s, 442, 714, 59, '#fff', '10:39');
  flag(s, 583, 714, 59, '#fff', '');
  flag(s, 577, 714, 60, CYAN, '14:30');
  flag(s, 644, 714, 59, CYAN, '16:30');
  flag(s, 1185, 714, 59, CYAN, '08:00');
  priceTag(s, o);
}
```
